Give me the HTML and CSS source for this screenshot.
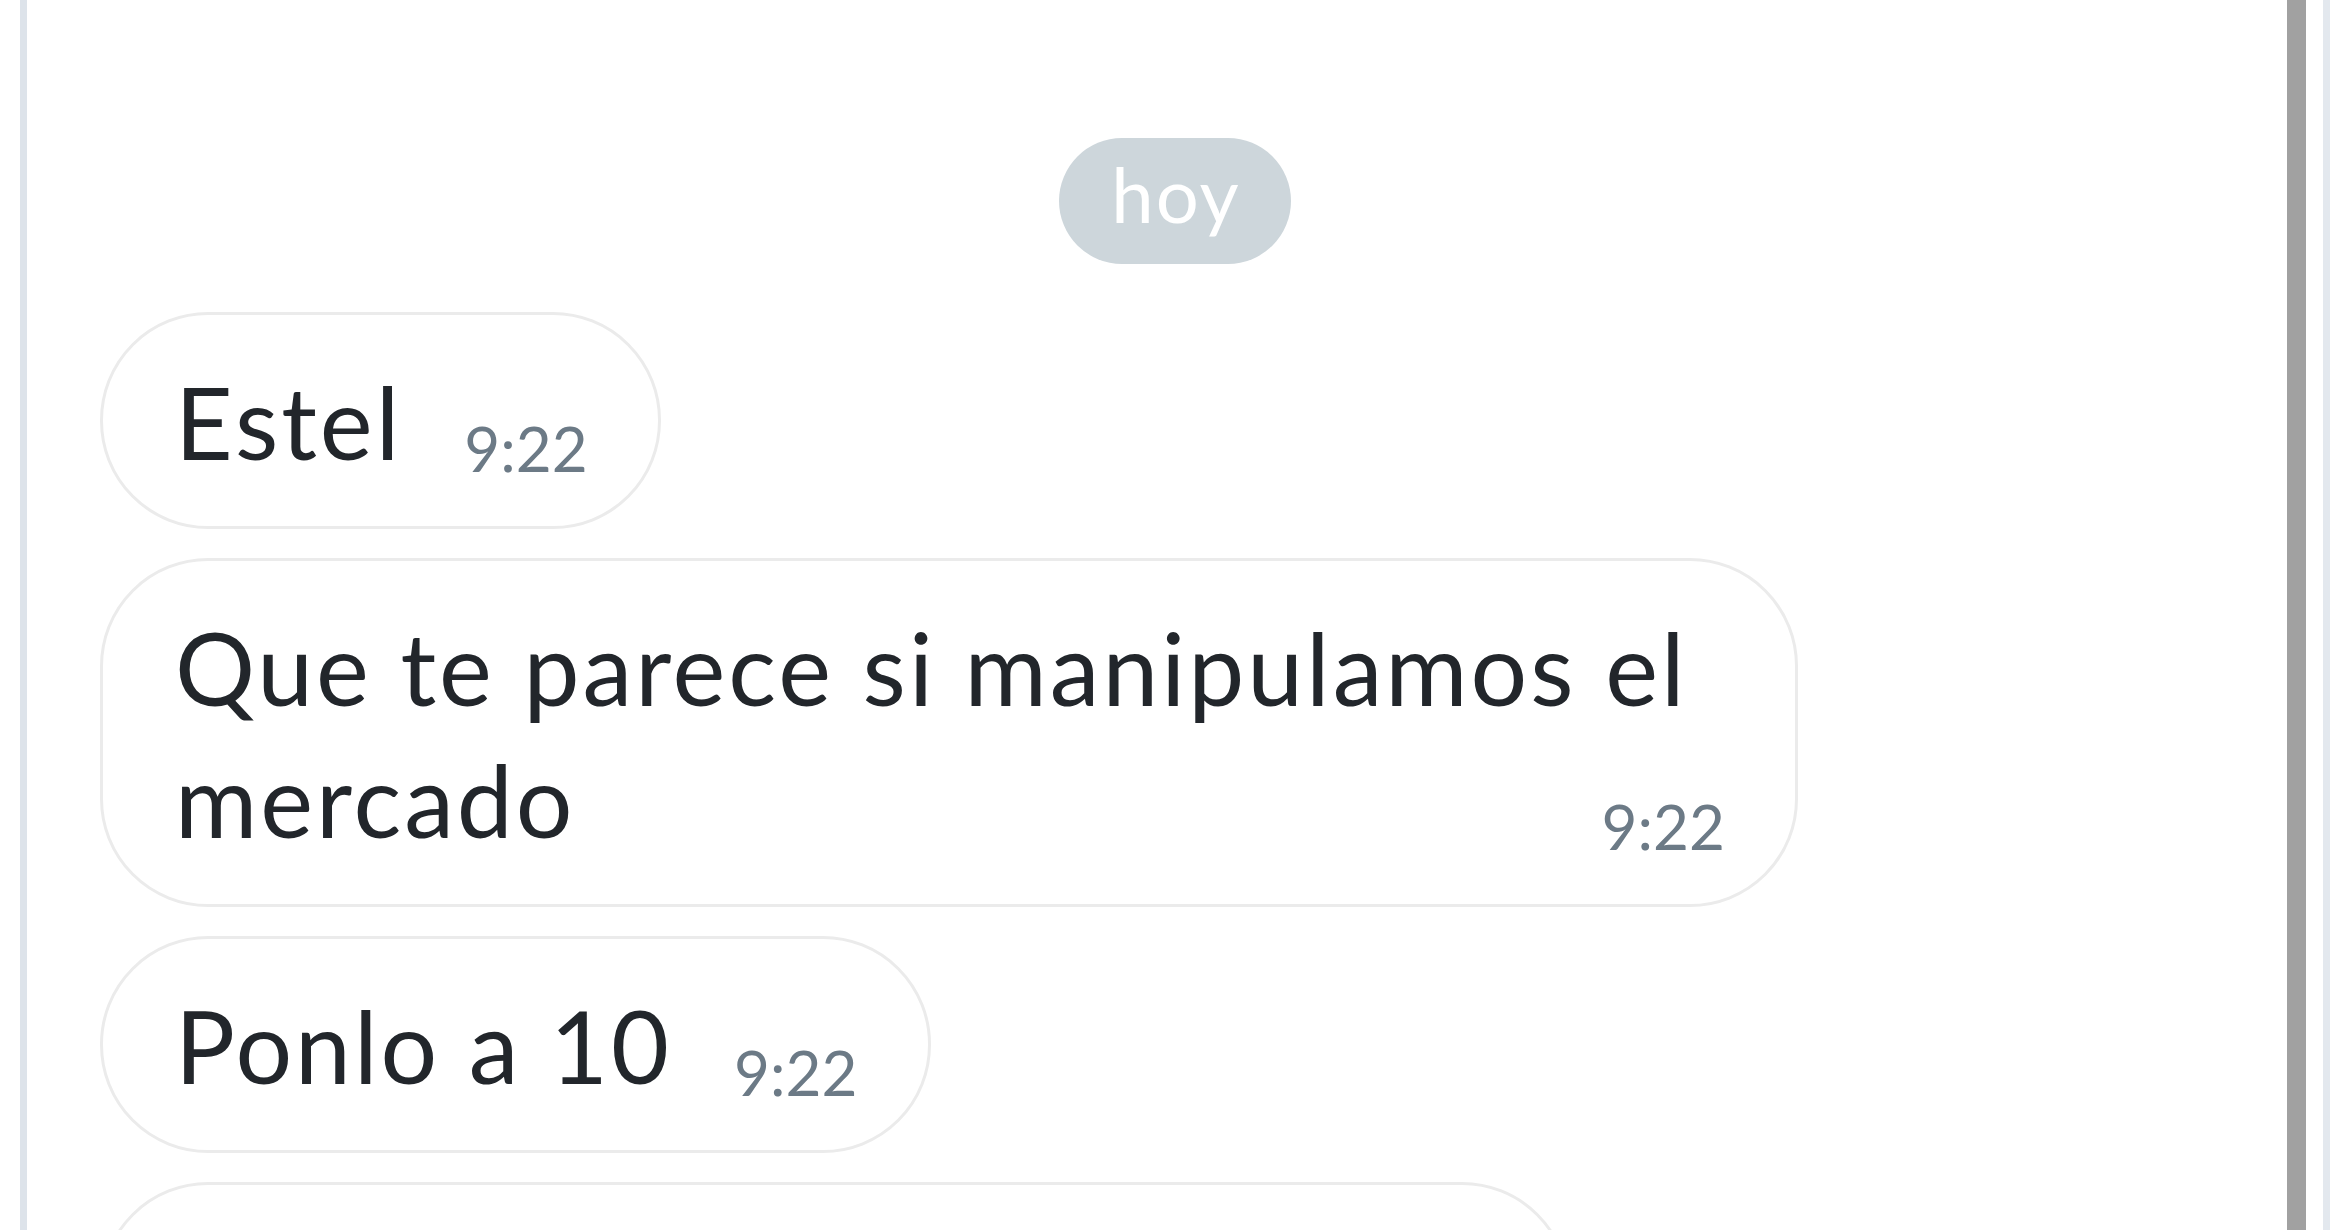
FILE: index.html
```html
<!DOCTYPE html>
<html lang="es">
<head>
<meta charset="utf-8">
<title>Chat</title>
<link rel="stylesheet" href="styles.css">
</head>
<body>
<div class="frame">
  <div class="chat">
    <div class="day"><span class="day-pill">hoy</span></div>
    <div class="msg"><span class="text">Estel</span><span class="time">9:22</span></div>
    <div class="msg"><span class="text">Que te parece si manipulamos el</span> <span class="text">mercado</span><span class="time">9:22</span></div>
    <div class="msg"><span class="text">Ponlo a 10</span><span class="time">9:22</span></div>
    <div class="msg msg-cut"></div>
  </div>
  <div class="scrollbar"></div>
</div>
</body>
</html>
```

FILE: styles.css
```css
html, body {
  margin: 0;
  height: 100%;
  background: #ffffff;
  overflow: hidden;
}

body {
  font-family: Lato, "Open Sans", sans-serif;
}

.frame {
  position: relative;
  box-sizing: border-box;
  height: 1230px;
  margin: 0 20px;
  border-left: 7px solid #dde3ea;
  border-right: 7px solid #e3e8ee;
}

.chat {
  display: flex;
  flex-direction: column;
  align-items: flex-start;
  gap: 29px;
  padding-top: 138px;
}

.day {
  align-self: stretch;
  display: flex;
  justify-content: center;
  margin-bottom: 19px;
}

.day-pill {
  background: #cdd6db;
  color: #ffffff;
  font-size: 76px;
  letter-spacing: 2px;
  line-height: 112px;
  padding: 0 50px 14px 52px;
  border-radius: 63px;
}

.msg {
  box-sizing: border-box;
  max-width: 1698px;
  margin-left: 73px;
  padding: 40px 70px 39px 72px;
  border: 3px solid #ebebeb;
  border-radius: 108px;
  font-size: 100px;
  line-height: 132px;
  color: #22262b;
  background: #ffffff;
  letter-spacing: 3px;
}

.time {
  float: right;
  margin: 55px 0 0 62px;
  font-size: 62px;
  line-height: 76px;
  letter-spacing: 0;
  color: #6c7a86;
}

.msg-cut {
  width: 1470px;
  height: 217px;
}

.scrollbar {
  position: absolute;
  top: 0;
  bottom: 0;
  right: 17px;
  width: 19px;
  background: #a1a1a1;
}
```
